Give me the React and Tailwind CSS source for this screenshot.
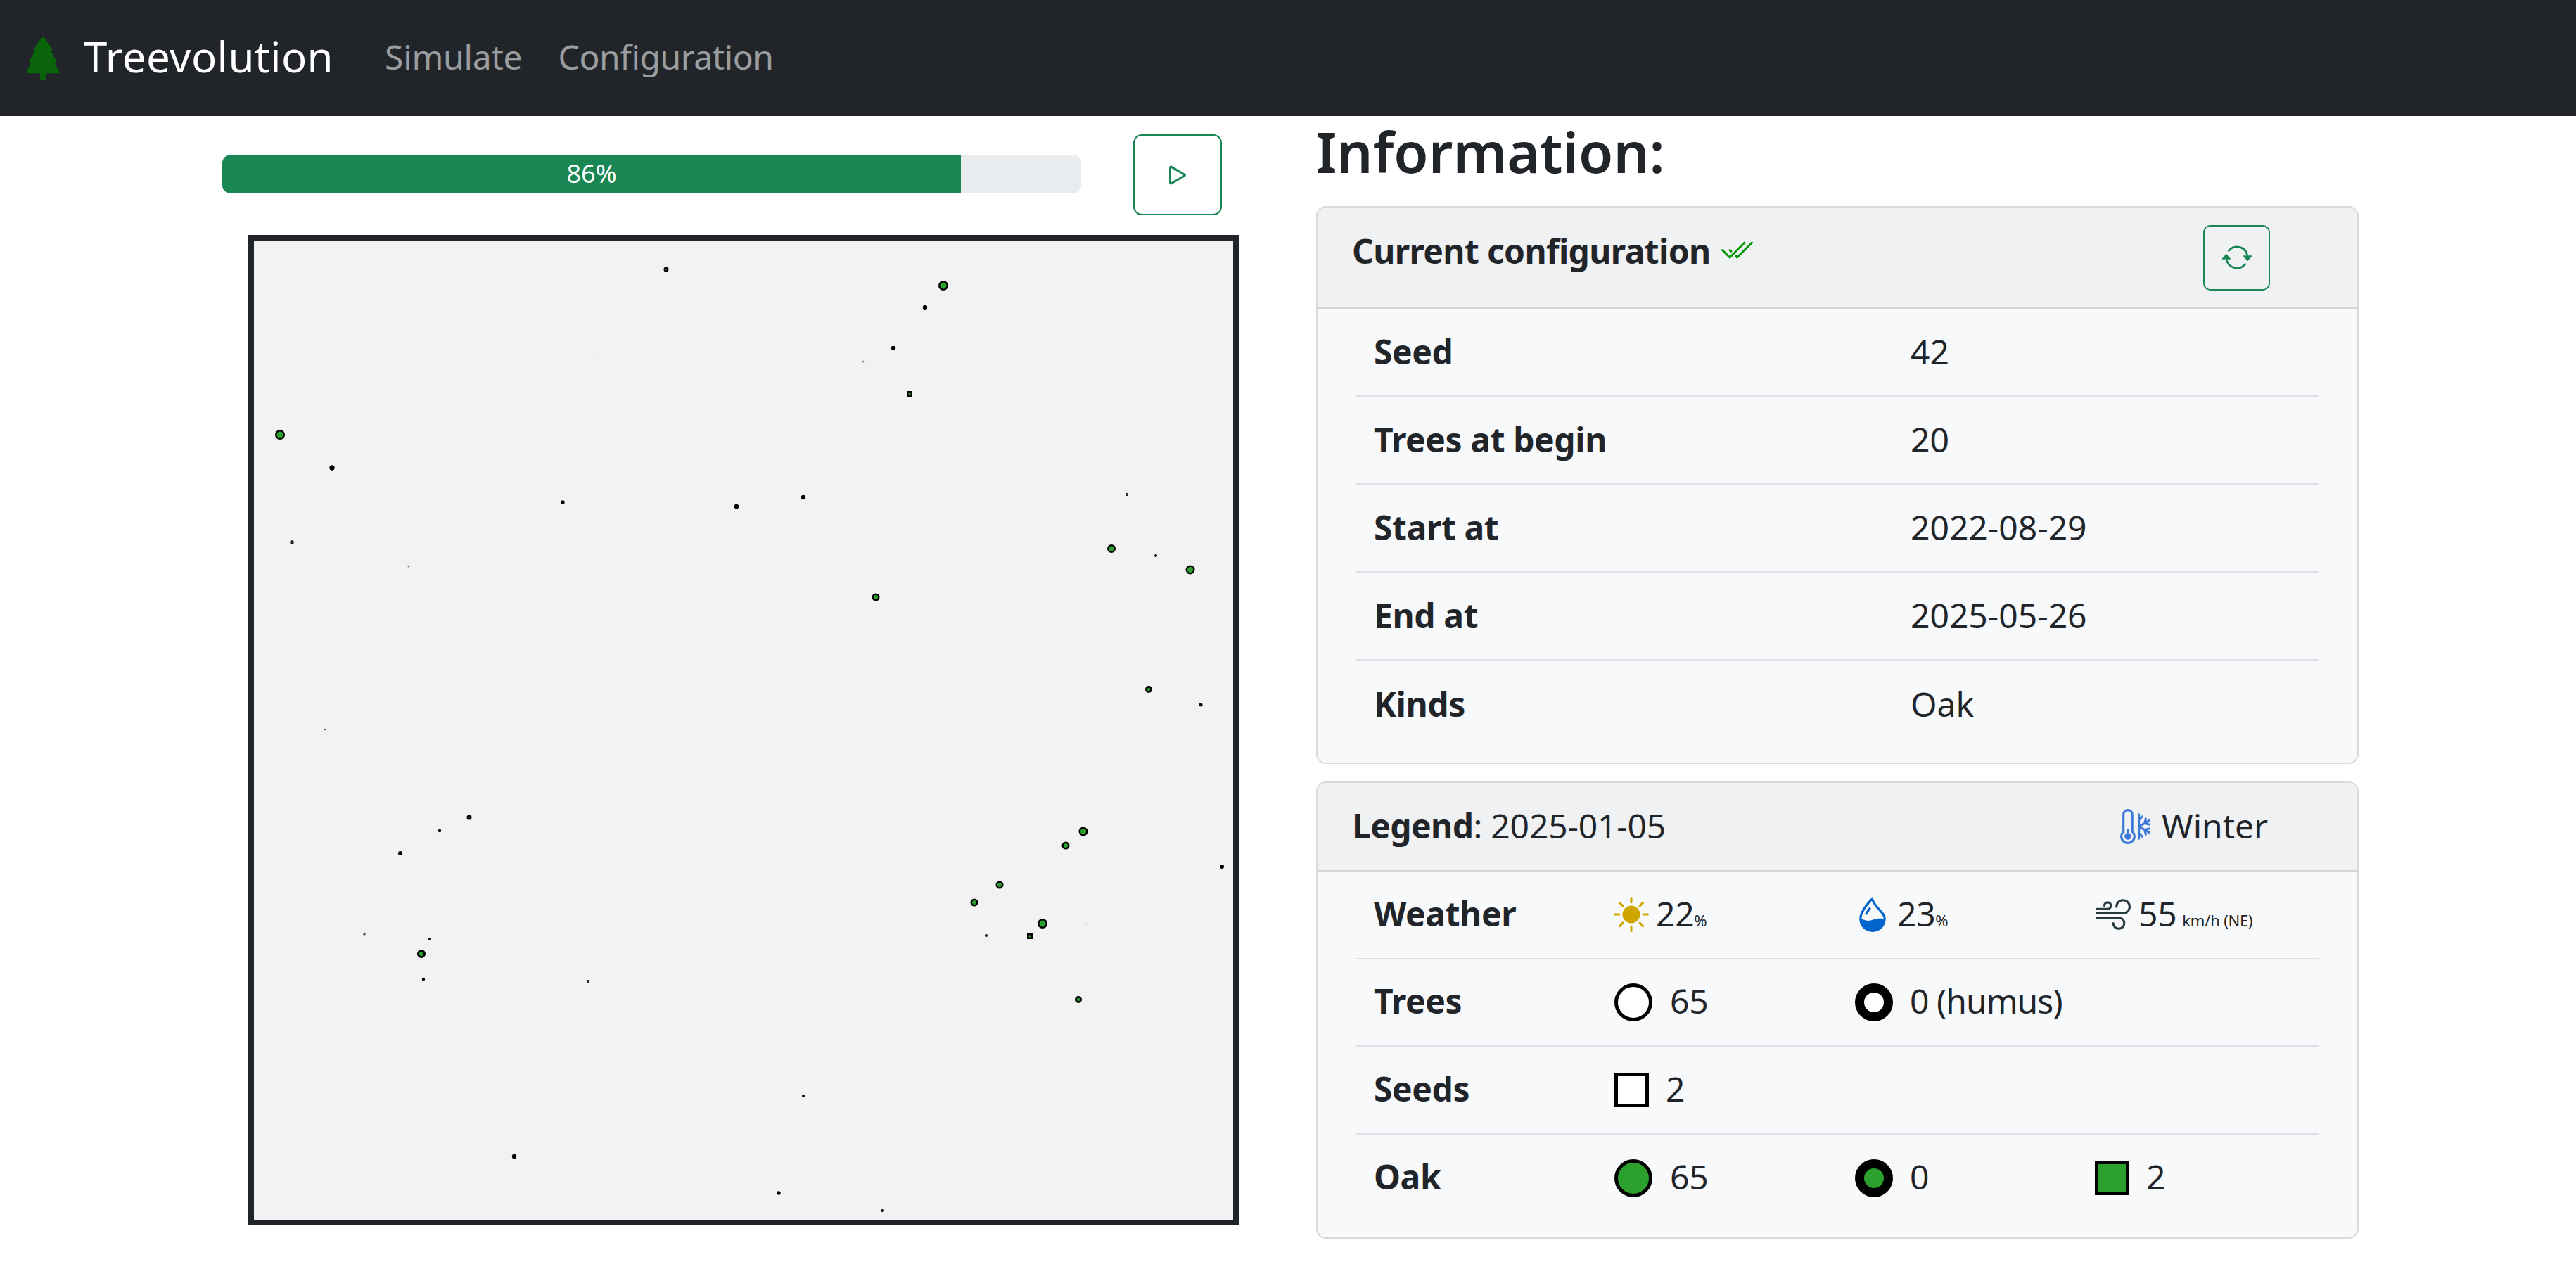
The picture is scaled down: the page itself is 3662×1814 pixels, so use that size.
import {
  BsArrowRepeat,
  BsBrightnessHighFill,
  BsCheck2All,
  BsDropletHalf,
  BsPlay,
  BsThermometerSnow,
  BsTreeFill,
  BsWind,
} from "react-icons/bs";

const FONT = "font-['Noto_Sans','Liberation_Sans',sans-serif]";

// [x, y, r, inner green r, alpha], page coordinates, the viewBox below starts at the canvas corner
const TREES = [
  [947, 383, 3.5, 1], [1341, 406, 7, 4.5], [1315, 437, 3.2, 0], [1270, 495, 3.2, 0],
  [1227, 514, 1.5, 0, 0.4], [852, 507, 1, 0, 0.15], [398, 618, 7, 4.5], [472, 665, 3.7, 0], [800, 714, 2.7, 0],
  [1047, 720, 3.2, 0], [1142, 707, 3.2, 0], [415, 771, 2.7, 1], [581, 805, 1.5, 0, 0.5],
  [1245, 849, 5.5, 3], [1540, 1182, 6.5, 4], [1515, 1202, 5.5, 3], [1737, 1232, 3, 0],
  [1421, 1258, 5.5, 3], [1385, 1283, 5.5, 3], [1482, 1313, 7, 4.5], [1402, 1330, 2, 0.8],
  [1544, 1313, 1.5, 0, 0.08], [1533, 1421, 5, 2.2], [1602, 703, 2, 0.8], [1580, 780, 6, 3.5],
  [1643, 790, 2, 0.8], [1692, 810, 6.5, 4], [1633, 980, 5, 2.2], [1707, 1002, 2.5, 0.5], [462, 1037, 1.2, 0, 0.6],
  [667, 1162, 3.5, 0.8], [625, 1181, 2.2, 0], [569, 1213, 3, 0], [610, 1335, 2, 0.6],
  [518, 1328, 1.8, 0.8, 0.7], [599, 1356, 6, 3], [602, 1392, 2.2, 0], [836, 1395, 2, 0.8],
  [1142, 1558, 2, 0], [731, 1644, 3.2, 0], [1107, 1696, 2.7, 0], [1254, 1721, 2, 0],
];

const SEEDS = [
  [1293, 560],
  [1464, 1331],
];

function Forest() {
  return (
    <svg viewBox="361 342 1392 1392" className="block h-full w-full">
      {TREES.map(([x, y, r, g, alpha = 1]) => (
        <g key={`${x}-${y}`} opacity={alpha}>
          <circle cx={x} cy={y} r={r} fill="#000" />
          {g > 0 && <circle cx={x} cy={y} r={g} fill="#2ca02c" />}
        </g>
      ))}
      {SEEDS.map(([x, y]) => (
        <g key={`${x}-${y}`}>
          <rect x={x - 4} y={y - 4} width="8" height="8" fill="#000" />
          <rect x={x - 1.5} y={y - 1.5} width="3" height="3" fill="#2ca02c" />
        </g>
      ))}
    </svg>
  );
}

function Row({ label, last, children }) {
  return (
    <div className={`flex h-[124.5px] items-center pl-[26px] ${last ? "" : "border-b-2 border-[#dee2e6]"}`}>
      <span className="w-[342px] pb-[3px] text-[48px] font-bold tracking-[-0.4px]">{label}</span>
      {children}
    </div>
  );
}

function Cell({ className, children }) {
  return <div className={`flex items-center ${className}`}>{children}</div>;
}

function Num({ className, children }) {
  return <span className={`pb-[3px] tracking-[-0.3px] ${className}`}>{children}</span>;
}

function Circle({ thick, fill }) {
  return (
    <span
      className={`box-border block h-[54px] w-[54px] rounded-full border-black ${thick ? "border-[13px]" : "border-[5px]"} ${fill}`}
    />
  );
}

function Square({ fill }) {
  return <span className={`box-border block h-[49px] w-[49px] border-[5px] border-black ${fill}`} />;
}

function ConfigRow({ label, value, last }) {
  return (
    <div className={`flex h-[125px] items-center pl-[26px] ${last ? "" : "border-b-2 border-[#dee2e6]"}`}>
      <span className="w-[763px] pb-[2px] text-[48px] font-bold tracking-[-0.4px]">{label}</span>
      <span className="pb-[2px] text-[48px]">{value}</span>
    </div>
  );
}

export default function App() {
  return (
    <div className={`min-h-screen bg-white text-[#212529] ${FONT}`}>
      <nav className="flex h-[165px] items-center bg-[#212529] pl-[30px]">
        <BsTreeFill size={62} color="#0a640a" />
        <a className="ml-[27px] pb-[5px] text-[60px] leading-none tracking-[0.4px] text-white">Treevolution</a>
        <a className="ml-[73px] pb-[4px] text-[48px] leading-none tracking-[-0.2px] text-white/55">Simulate</a>
        <a className="ml-[51px] pb-[4px] text-[48px] leading-none tracking-[-0.4px] text-white/55">Configuration</a>
      </nav>

      <main className="flex pl-[316px]">
        <section className="w-[1444px]">
          <div className="mt-[26px] flex items-center">
            <div className="mb-[3px] flex h-[55px] w-[1221px] overflow-hidden rounded-[12px] bg-[#e9ecef]">
              <div className="flex w-[86%] items-center justify-center bg-[#198754] text-[36px] text-white">86%</div>
            </div>
            <button className="ml-[74px] flex h-[115px] w-[126px] items-center justify-center rounded-[12px] border-2 border-[#198754] text-[#198754]">
              <BsPlay size={48} />
            </button>
          </div>
          <div className="ml-[37px] mt-[28px] h-[1408px] w-[1408px] border-8 border-[#212529] bg-[#f2f2f2]">
            <Forest />
          </div>
        </section>

        <section className="ml-[111px] w-[1482px]">
          <h2 className="flex h-[128px] items-center pb-[28px] text-[80px] font-semibold leading-none">Information:</h2>

          <div className="overflow-hidden rounded-[14px] border-2 border-[#d9dadb] bg-[#f8f9fa]">
            <div className="flex h-[144px] items-center justify-between border-b-2 border-[#d5d6d8] bg-[#f0f1f3] pl-[49px] pr-[124px]">
              <div className="flex items-center pb-[18px]">
                <span className="text-[48px] font-bold tracking-[-0.65px]">Current configuration</span>
                <BsCheck2All size={48} color="#090" className="ml-[12px]" />
              </div>
              <button className="flex h-[93px] w-[95px] items-center justify-center rounded-[10px] border-2 border-[#198754] text-[#198754]">
                <BsArrowRepeat size={44} />
              </button>
            </div>
            <div className="mx-[54px] pb-[20px]">
              <ConfigRow label="Seed" value="42" />
              <ConfigRow label="Trees at begin" value="20" />
              <ConfigRow label="Start at" value="2022-08-29" />
              <ConfigRow label="End at" value="2025-05-26" />
              <ConfigRow label="Kinds" value="Oak" last />
            </div>
          </div>

          <div className="mt-[25px] overflow-hidden rounded-[14px] border-2 border-[#d9dadb] bg-[#f8f9fa]">
            <div className="flex h-[126px] items-center justify-between border-b-2 border-[#d5d6d8] bg-[#f0f1f3] pl-[49px] pr-[127px]">
              <div className="pb-[3px] text-[48px] tracking-[-0.2px]">
                <span className="font-bold tracking-[-0.6px]">Legend</span>: 2025-01-05
              </div>
              <div className="flex items-center text-[48px]">
                <BsThermometerSnow size={50} color="#3b78d8" className="mr-[9px]" />
                <span className="pb-[3px]">Winter</span>
              </div>
            </div>
            <div className="mx-[54px] pb-[22px] text-[48px]">
              <Row label="Weather">
                <Cell className="w-[342px]">
                  <BsBrightnessHighFill size={50} color="#cfa500" className="-ml-px" />
                  <Num className="ml-[10px]">22</Num>
                  <span className="mt-[16px] text-[22px]">%</span>
                </Cell>
                <Cell className="w-[342px]">
                  <BsDropletHalf size={50} color="#0064cc" />
                  <Num className="ml-[10px]">23</Num>
                  <span className="mt-[16px] text-[22px]">%</span>
                </Cell>
                <Cell>
                  <BsWind size={50} color="#263a3f" />
                  <Num className="ml-[11px]">55</Num>
                  <span className="ml-[8px] mt-[16px] text-[22px] tracking-[-0.2px]">km/h (NE)</span>
                </Cell>
              </Row>
              <Row label="Trees">
                <Cell className="w-[342px]">
                  <Circle fill="bg-white" />
                  <Num className="ml-[25px]">65</Num>
                </Cell>
                <Cell>
                  <Circle thick fill="bg-white" />
                  <Num className="ml-[24px] tracking-[-1px]">0 (humus)</Num>
                </Cell>
              </Row>
              <Row label="Seeds">
                <Cell>
                  <Square fill="bg-white" />
                  <Num className="ml-[24px]">2</Num>
                </Cell>
              </Row>
              <Row label="Oak" last>
                <Cell className="w-[342px]">
                  <Circle fill="bg-[#2ca02c]" />
                  <Num className="ml-[25px]">65</Num>
                </Cell>
                <Cell className="w-[341px]">
                  <Circle thick fill="bg-[#2ca02c]" />
                  <Num className="ml-[24px]">0</Num>
                </Cell>
                <Cell>
                  <Square fill="bg-[#2ca02c]" />
                  <Num className="ml-[24px]">2</Num>
                </Cell>
              </Row>
            </div>
          </div>
        </section>
      </main>
    </div>
  );
}
